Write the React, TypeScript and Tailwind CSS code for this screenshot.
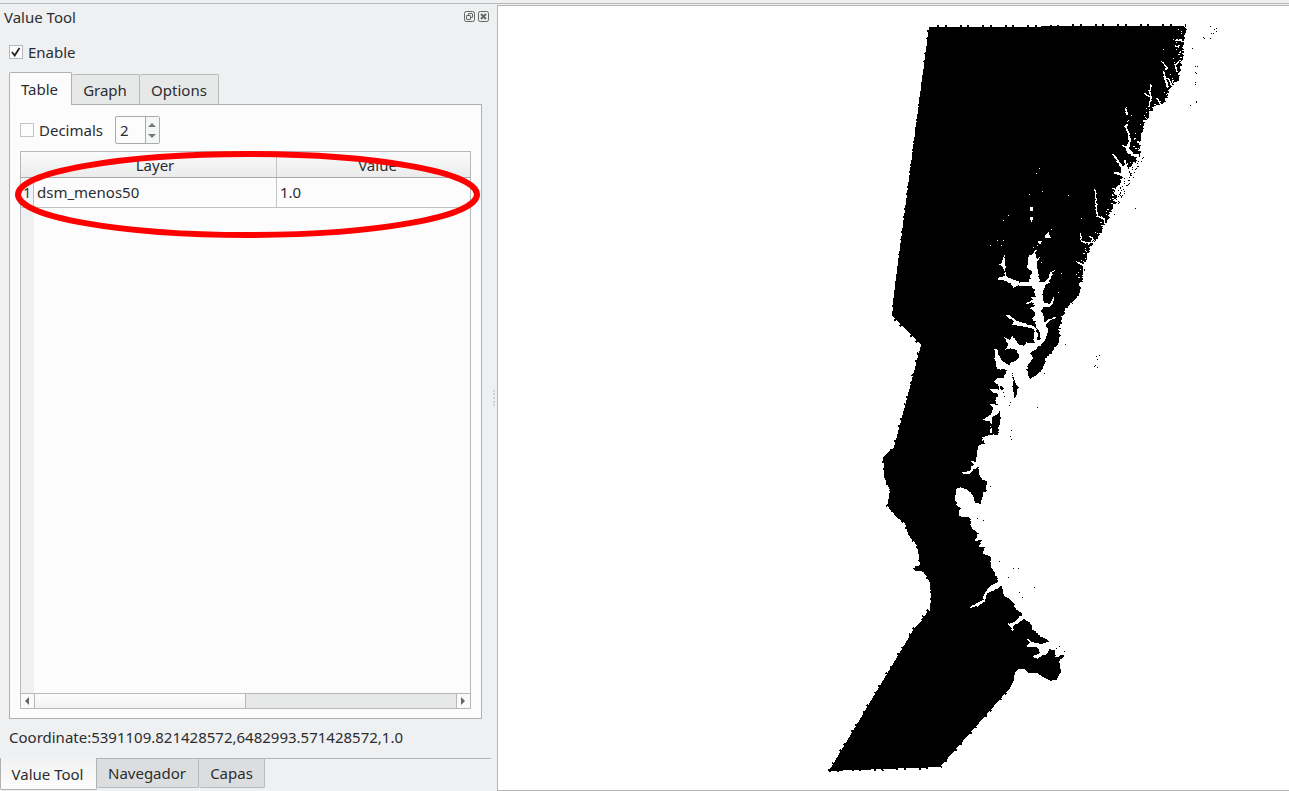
import React from "react";

type Pt = [number, number];

function parse(s: string): Pt[] {
  return s.trim().split(/\s+/).map((p) => p.split(",").map(Number) as Pt);
}

// Maps points given on a 3x grid with its own origin to map coordinates.
function grid(ox: number, oy: number, s: string): Pt[] {
  return parse(s).map(([x, y]) => [ox + x / 3, oy + y / 3]);
}

function noise(seed: number) {
  let n = seed;
  return () => {
    n = (n * 16807) % 2147483647;
    return n / 2147483647;
  };
}

// Breaks each segment into short steps and shifts them for a ragged shoreline.
function ragged(pts: Pt[], amp: number, seed: number): Pt[] {
  const rnd = noise(seed);
  const out: Pt[] = [];
  for (let i = 0; i < pts.length - 1; i++) {
    const [ax, ay] = pts[i];
    const [bx, by] = pts[i + 1];
    const n = Math.max(1, Math.round(Math.hypot(bx - ax, by - ay) / 1.6));
    for (let k = 0; k < n; k++) {
      out.push([
        ax + ((bx - ax) * k) / n + (rnd() - 0.5) * amp,
        ay + ((by - ay) * k) / n + (rnd() - 0.5) * amp * 0.6,
      ]);
    }
  }
  out.push(pts[pts.length - 1]);
  return out;
}

const d = (pts: Pt[]) => "M" + pts.map((p) => p[0].toFixed(1) + " " + p[1].toFixed(1)).join("L");

const westNorth = parse("892,316 895,285 929,27");
const westMid = [...grid(870, 440, "70,25 78,0"), ...parse("921,345 892,316")];
const westBend = grid(
  870,
  440,
  "155,540 180,510 183,470 180,430 170,410 158,393 135,392 130,385 150,375 147,350 140,315 115,285 105,250 80,232 52,198 60,150 42,112 40,50 70,25",
);
const westSouth = parse("829,771 915,627 922,620");

const eastNorth = parse(
  "1185,26 1186,33 1184,43 1183,52 1181,62 1179,72 1177,80 1174,84 1171,88 1168,93 1166,99 1162,104 1157,105 1152,109 1149,117 1145,121 1143,130 1140,141 1140,153 1137,159 1133,167 1129,177 1124,186 1115,199 1113,208 1107,222 1098,237 1090,248 1085,263 1082,280 1077,297 1067,307 1062,317 1059,330 1060,341 1048,355 1045,360 1042,370 1037,375 1030,379",
);
const gulf = grid(
  970,
  300,
  "180,237 168,205 182,185 165,170 170,160 145,155 145,170 128,195 110,195 92,180 78,145 75,170 78,200 100,205 110,215 85,225 75,245 95,268 60,268 80,285 75,300 80,315 60,312 70,325 60,345 38,360 60,365 62,400 83,403 84,365 92,330 90,360 84,403 60,405 35,412 42,430 20,440 15,450",
);
const eastSouth = [
  ...grid(
    870,
    440,
    "345,0 325,20 320,45 315,65 295,62 312,72 300,90 272,100 298,102 310,88 325,80 330,112 352,125 350,150 338,165 332,190 315,190 310,165 300,155 275,143 262,143 255,165 262,200 272,204 264,210 268,228 298,232 305,260 325,280 315,303 337,300 325,320 345,320 335,340 362,350 365,380 380,410 385,425 360,438 345,460 340,480 300,502 325,498 345,485 352,460 395,437 402,467 428,485 435,505 455,520",
  ),
  ...grid(
    950,
    560,
    "215,165 185,190 168,190 183,200 187,217 190,198 210,186 222,176 240,190 250,210 280,235 300,245 270,252 245,245 230,235 238,250 230,260 260,262 270,278 250,290 262,295 275,286 290,284 300,268 315,270 318,292 345,285 328,300 332,330 320,360",
  ),
];
const southCape = grid(950, 560, "320,360 300,362 280,352 262,340 235,340 225,328 205,328 195,338 190,365");
const south = [...parse("1010,688 940,767 829,771")];

const land = d([
  ...westSouth,
  ...westBend,
  ...westMid,
  ...westNorth,
  ...ragged(eastNorth, 3.6, 11),
  ...ragged(gulf, 1.8, 29),
  ...ragged(eastSouth, 2, 47),
  ...southCape,
  ...south,
]) + "Z";

const waters: Pt[][] = [
  grid(
    985,
    225,
    "130,100 135,90 150,85 155,100 158,130 160,150 162,170 178,172 190,160 195,142 210,135 203,144 197,158 192,172 180,180 178,195 172,215 180,235 195,235 203,220 207,215 205,235 195,246 172,247 170,262 178,280 180,293 190,283 212,275 212,279 192,288 184,300 188,320 182,345 165,360 150,375 135,385 145,400 125,420 130,435 125,450 132,460 100,500 90,520 75,540 60,535 50,520 40,500 45,475 60,455 50,435 38,430 32,400 30,370 36,372 40,395 50,405 60,412 70,420 80,400 100,395 95,375 75,370 60,375 70,358 55,335 75,345 80,330 92,345 105,360 118,365 125,352 150,355 145,335 150,320 140,310 115,305 80,300 85,290 60,270 75,272 95,288 120,295 150,305 158,325 156,345 166,345 166,325 155,310 150,290 140,280 150,270 150,262 136,250 148,242 145,232 120,237 145,224 140,215 152,215 148,195 140,184 120,184 100,182 85,188 80,177 65,170 38,163 45,155 60,155 55,125 40,120 52,115 58,90 60,120 65,155 85,165 105,172 130,170 135,160 140,140 125,125",
  ),
  grid(970, 160, "180,142 190,142 190,153 180,153"),
  grid(970, 160, "180,170 188,170 188,176 184,186 180,176"),
  grid(970, 160, "235,213 238,225 243,235 226,235 224,226 231,222"),
  grid(970, 160, "204,243 214,243 214,251 206,251"),
  grid(1060, 10, "160,432 175,450 185,465 193,468 192,450 200,455 205,475 225,455 238,458 225,490 205,510 190,535 175,560 160,550 180,520 188,498 165,487 187,490 180,470"),
  grid(1060, 10, "205,328 204,345 200,355 210,372 212,395 208,415 220,430 240,434 236,444 215,436 200,428 196,412 205,395 206,380 194,352"),
  grid(1060, 10, "302,152 312,158 324,175 314,182 318,205 326,222 326,235 318,228 312,205 308,185 318,175 308,160"),
];

const creeks = [
  "1168,78 1171,84 1174,80",
  "1179,48 1175,45",
  "1179,61 1175,65 1177,72",
  "1176,40 1182,40",
  "1151,84 1150,91 1151,99 1149,107",
  "1145,94 1150,97",
  "1157,98 1160,104",
  "1126,108 1127,115",
  "1123,145 1127,148",
  "1095,189 1096,200 1097,216 1104,219 1106,225",
  "1113,154 1125,171",
  "1081,233 1081,241 1088,243 1094,242",
  "1090,236 1093,239 1091,242",
  "1077,262 1083,265 1084,272",
  "1032,257 1037,250",
  "1033,265 1040,257",
  "1115,173 1124,176",
  "1113,188 1119,193",
].map(parse);

const islands: Pt[][] = [
  grid(970, 300, "98,160 115,148 140,150 148,168 140,182 126,188 118,196 108,190 95,178"),
  grid(970, 300, "80,220 100,206 112,212 102,226 102,236 84,234"),
  grid(970, 300, "124,215 130,232 136,255 148,262 140,270 136,294 130,292 132,275 127,260 130,240"),
  grid(970, 300, "90,258 102,262 102,272 92,270"),
  grid(970, 300, "66,352 84,342 90,330 90,358 84,404 66,402"),
  grid(970, 300, "70,282 84,280 84,290 74,292"),
  grid(970, 300, "188,155 210,148 215,160 230,162 222,200 208,215 180,236 170,208 190,182"),
];

const blackDots = parse(
  "1210,26 1214,29 1216,31 1213,33 1203,37 1204,38 1210,38 1211,33 1216,28 1192,48 1195,66 1197,66 1195,72 1196,73 1195,82 1195,84 1190,105 1196,102 1196,101 1114,214 1135,208 1065,344 1096,356 1099,355 1097,359 1095,365 1097,367 1094,366 1037,407 1044,373 1010,402 1009,405 1011,430 1010,436 1011,439 977,518 983,520 990,486 999,561 1013,568 1018,568 1008,577 1034,587 1019,592 1022,597 1064,651 1059,646 1061,657 1056,648 1003,392 1004,396",
);
const whiteDots = parse(
  "1039,168 1036,173 1042,191 1029,194 1068,195 1008,215 1003,220 1081,218 997,240 1003,240 990,245 1001,245 1051,229 1041,262 1061,273 1058,292 1163,49 1173,39 1176,42 1173,58 1126,107 1125,112 1148,90 1139,144 1068,195 1052,318 1048,320 1138,148 1131,115 1147,95 1033,247 1037,245 1029,255 970,607 1170,74 1178,54 1175,84 1068,316 915,553 915,556",
);

const rnd = noise(83);
const specks: Pt[] = Array.from({ length: 60 }, () => {
  const t = rnd();
  return [1139 - 25 * t + (rnd() - 0.4) * 8, 157 + 46 * t];
});

// Short white flecks just inland of the northern coast.
const flecks = ragged(eastNorth.slice(0, 30), 1, 5)
  .filter(() => rnd() < 0.5)
  .map(([x, y]) => ({ x: Math.round(x - 1 - rnd() * 7), y: Math.round(y), w: rnd() < 0.35 ? 2 : 1 }));

function MapDrawing() {
  return (
    <svg className="block h-full w-full" viewBox="498 6 791 784" shapeRendering="crispEdges" preserveAspectRatio="xMinYMin slice">
      <path d={land} />
      <g fill="none" stroke="#000" strokeWidth="3" strokeDasharray="2 5.5 2 13">
        <path d="M937.5 26.6L1186 25.4" />
        <path d="M929 30L892 316L921 345L895 444" />
        <path d={d(westBend)} strokeWidth="2" />
        <path d="M829 771L915 627L930 608M940 767L1010 688M829 770.5L940 767.5" />
      </g>
      <g fill="#fff">
        {waters.map((w, i) => (
          <path key={i} d={d(ragged([...w, w[0]], i > 0 && i < 5 ? 0.4 : 1.6, 101 + i)) + "Z"} />
        ))}
        {whiteDots.map(([x, y], i) => (
          <rect key={i} x={x} y={y} width="1" height="1" />
        ))}
        {flecks.map((f, i) => (
          <rect key={i} x={f.x} y={f.y} width={f.w} height="1" />
        ))}
      </g>
      <g fill="none" stroke="#fff" strokeWidth="1.3">
        {creeks.map((c, i) => (
          <path key={i} d={d(ragged(c, 1.3, 307 + i))} />
        ))}
      </g>
      {islands.map((p, i) => (
        <path key={i} d={d(ragged([...p, p[0]], 1.8, 211 + i)) + "Z"} />
      ))}
      {blackDots.map(([x, y], i) => (
        <rect key={i} x={x} y={y} width="1" height="1" />
      ))}
      {specks.map(([x, y], i) => (
        <rect key={i} x={Math.round(x)} y={Math.round(y)} width="1" height="1" />
      ))}
    </svg>
  );
}

function TitleButtons() {
  return (
    <svg className="block" width="26" height="12" viewBox="0 0 26 12" fill="none" stroke="#666867">
      <rect x=".5" y=".5" width="10" height="10" rx="1.8" />
      <rect x="4.5" y="2.5" width="4" height="4" rx=".5" />
      <rect x="2.5" y="4.5" width="4" height="4" rx=".5" fill="#eff0f1" />
      <rect x="14.5" y=".5" width="10" height="10" rx="1.8" />
      <path d="M17 3L22 8M22 3L17 8" strokeWidth="2" />
    </svg>
  );
}

export default function App() {
  return (
    <div className="relative flex h-[791px] w-[1289px] flex-col overflow-hidden bg-[#eff0f2] font-['Noto_Sans',sans-serif] text-[15px] leading-5 text-[#2b2d2f]">
      <div className="h-[5px] shrink-0 pt-[3px]">
        <div className="h-px bg-[#b6b7b8]" />
      </div>
      <div className="flex min-h-0 flex-1">
        <aside className="flex w-[491px] shrink-0 flex-col">
          <header className="flex h-[26px] items-center justify-between pb-[3px] pl-1 pr-px">
            <span>Value Tool</span>
            <TitleButtons />
          </header>
          <label className="flex h-[41px] items-center gap-[5px] pb-px pl-[9px] pt-0.5">
            <span className="flex size-3.5 items-center justify-center border border-[#b7b8b9] bg-[#fcfcfc]">
              <svg width="10" height="10" viewBox="0 0 10 10" fill="none" stroke="#222" strokeWidth="1.8">
                <path d="M1 5L3.7 8.5L8.5 1" />
              </svg>
            </span>
            <span>Enable</span>
          </label>
          <nav className="flex h-8 items-end pl-[9px]">
            <div className="relative -mb-px flex h-[33px] w-[63px] items-center justify-center rounded-t-[2px] border border-b-0 border-[#b1b2b3] bg-[#fcfcfc] pr-0.5">Table</div>
            <div className="flex h-[30px] w-[68px] items-center justify-center rounded-t-[2px] border border-b-0 border-l-0 border-[#b9babb] bg-[#e7e8e8] pr-px">Graph</div>
            <div className="flex h-[30px] w-[79px] items-center justify-center rounded-t-[2px] border border-b-0 border-l-0 border-[#b9babb] bg-[#e7e8e8]">Options</div>
          </nav>
          <section className="ml-[9px] flex h-[615px] w-[473px] flex-col border border-[#aeafb0] bg-[#fcfcfc] px-2.5 pt-[11px]">
            <div className="flex h-7 items-center">
              <span className="size-3.5 border border-[#c2c3c4] bg-[#fcfcfc]" />
              <span className="ml-[5px] w-[76px]">Decimals</span>
              <div className="flex h-7 w-[45px] rounded-[2px] border border-[#a9aaab]">
                <span className="flex w-[30px] items-center border-r border-[#a9aaab] pl-1">2</span>
                <div className="flex flex-1 flex-col items-center justify-center gap-[7px] bg-[#f5f6f6] pr-px">
                  <span className="border-x-4 border-b-4 border-x-transparent border-b-[#777879]" />
                  <span className="border-x-4 border-t-4 border-x-transparent border-t-[#777879]" />
                </div>
              </div>
            </div>
            <div className="mt-[7px] flex h-[558px] w-[451px] flex-col border border-[#b7b8b9]">
              <div className="flex h-[26px] shrink-0 border-b border-[#a9aaab] bg-linear-to-b from-[#fafbfc] to-[#ebebeb]">
                <div className="w-[13px]" />
                <div className="flex w-[243px] items-center justify-center border-r border-[#c4c5c6]">Layer</div>
                <div className="flex flex-1 items-center justify-center pl-2">Value</div>
              </div>
              <div className="flex h-[30px] shrink-0 border-b border-[#c0c1c2]">
                <div className="flex w-[13px] items-center justify-center border-r border-[#c0c1c2] bg-[#f3f4f5] text-[13.5px]">1</div>
                <div className="flex w-[243px] items-center border-r border-[#c4c5c6] pb-0.5 pl-[3px]">dsm_menos50</div>
                <div className="flex items-center pb-0.5 pl-[3px]">1.0</div>
              </div>
              <div className="flex min-h-0 flex-1">
                <div className="w-[13px] bg-[#eff0f2]" />
              </div>
              <div className="flex h-[15px] shrink-0 border-t border-[#b7b8b9] bg-[#e6e7e7]">
                <div className="flex w-3.5 items-center justify-center border-r border-[#b7b8b9] bg-[#fafafa] pr-px">
                  <span className="border-y-4 border-r-4 border-y-transparent border-r-[#666]" />
                </div>
                <div className="w-[211px] border-r border-[#b7b8b9] bg-linear-to-b from-[#fcfcfc] to-[#f1f2f2]" />
                <div className="flex-1" />
                <div className="flex w-3.5 items-center justify-center border-l border-[#b7b8b9] bg-[#fafafa] pr-0.5">
                  <span className="border-y-4 border-l-4 border-y-transparent border-l-[#666]" />
                </div>
              </div>
            </div>
          </section>
          <p className="flex h-[39px] items-center pb-[3px] pl-[9px]">Coordinate:5391109.821428572,6482993.571428572,1.0</p>
          <footer className="flex items-start">
            <div className="flex h-8 w-[97px] items-center justify-center rounded-b-[2px] border border-t-0 border-[#b0b1b2] bg-linear-to-b from-[#f1f2f3] to-[#fcfcfc] pr-0.5">Value Tool</div>
            <div className="flex flex-1 border-t border-[#b4b5b6]">
              <div className="flex h-[29px] w-[102px] items-center justify-center rounded-b-[2px] border border-l-0 border-t-0 border-[#b9babb] bg-[#dcddde] pr-px">Navegador</div>
              <div className="flex h-[29px] w-[66px] items-center justify-center rounded-b-[2px] border border-l-0 border-t-0 border-[#b9babb] bg-[#dcddde]">Capas</div>
            </div>
          </footer>
        </aside>
        <div className="flex w-1.5 flex-col items-center justify-center">
          <div className="h-4 border-l-2 border-dotted border-[#d2d3d4]" />
        </div>
        <main className="min-w-0 flex-1 border border-r-0 border-[#b4b5b6] bg-white">
          <MapDrawing />
        </main>
      </div>
      <svg className="pointer-events-none absolute left-[15px] top-[151px]" width="465" height="87" fill="none">
        <ellipse cx="232.5" cy="43.5" rx="229.5" ry="40.5" stroke="#f00" strokeWidth="6" />
      </svg>
    </div>
  );
}
